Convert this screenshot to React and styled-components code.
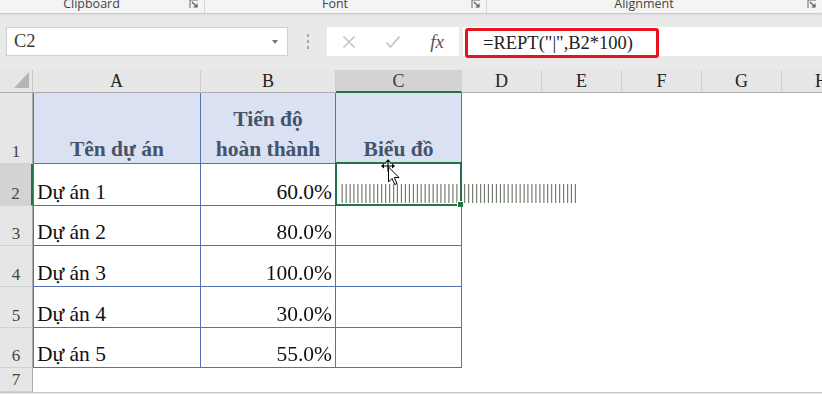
import React from "react";
import styled, { createGlobalStyle } from "styled-components";

const Global = createGlobalStyle`
  html, body { margin: 0; padding: 0; }
  body { width: 822px; height: 394px; overflow: hidden; background: #e9e9e9; }
  * { box-sizing: border-box; }
`;

const Page = styled.div`
  width: 822px;
  height: 394px;
  display: flex;
  flex-direction: column;
  background: #e9e9e9;
  overflow: hidden;
`;

/* ---------- ribbon group labels ---------- */
const Ribbon = styled.div`
  height: 13px;
  flex: none;
  display: flex;
  background: #f4f4f4;
  box-shadow: 0 1px 2px rgba(0, 0, 0, 0.18);
  position: relative;
  z-index: 1;
  overflow: hidden;
`;
const Group = styled.div`
  width: ${(p) => p.$w}px;
  flex: none;
  display: flex;
  align-items: flex-end;
  border-right: ${(p) => (p.$last ? "none" : "1px solid #d4d4d4")};
`;
const GroupLabel = styled.div`
  flex: 1;
  text-align: center;
  font-family: "Open Sans", "Noto Sans", sans-serif;
  font-size: 12.5px;
  line-height: 18px;
  color: #444;
  white-space: nowrap;
`;
const Launcher = styled.svg`
  width: 10px;
  height: 10px;
  flex: none;
  margin: 0 5px 4px 6px;
`;

const LauncherIcon = () => (
  <Launcher viewBox="0 0 10 10">
    <path d="M1 9 V1 H9" fill="none" stroke="#666" strokeWidth="1" />
    <path d="M3 3 L8 8 M8 4.5 V8 H4.5" fill="none" stroke="#555" strokeWidth="1.1" />
  </Launcher>
);

/* ---------- formula bar ---------- */
const FormulaRow = styled.div`
  height: 57px;
  flex: none;
  display: flex;
  align-items: flex-start;
  padding-top: 14px;
`;
const NameBox = styled.div`
  margin-left: 6px;
  width: 282px;
  height: 29px;
  background: #fff;
  border: 1px solid #d0d0d0;
  display: flex;
  align-items: center;
  padding: 0 7px;
  font-family: "Liberation Serif", serif;
  font-size: 18.5px;
  color: #3a3a3a;
`;
const NameText = styled.span`
  flex: 1;
`;
const Caret = styled.span`
  width: 0;
  height: 0;
  border-left: 3px solid transparent;
  border-right: 3px solid transparent;
  border-top: 4px solid #777;
  margin-right: 2px;
`;
const Grip = styled.div`
  width: 39px;
  height: 29px;
  display: flex;
  flex-direction: column;
  align-items: center;
  justify-content: center;
  gap: 3px;
`;
const Dot = styled.span`
  width: 2px;
  height: 3px;
  background: #a8a8a8;
`;
const FxButtons = styled.div`
  width: 132px;
  height: 29px;
  background: #fff;
  display: grid;
  grid-template-columns: repeat(3, 44px);
  align-items: center;
  justify-items: center;
`;
const FxText = styled.span`
  font-family: "Liberation Serif", serif;
  font-style: italic;
  font-size: 19px;
  color: #555;
`;
const FormulaInput = styled.div`
  flex: 1;
  margin-left: 4px;
  height: 29px;
  background: #fff;
  display: flex;
  align-items: flex-start;
  padding: 1px 0 0 2px;
  position: relative;
`;
const Highlight = styled.div`
  width: 194px;
  height: 30px;
  border: 3px solid #e5131c;
  border-radius: 3px;
  display: flex;
  align-items: center;
  padding-left: 15px;
  font-family: "Liberation Serif", serif;
  font-size: 18.5px;
  color: #222;
  white-space: nowrap;
`;

/* ---------- sheet ---------- */
const BLUE = "#4f73b3";
const GREEN = "#217346";

const Sheet = styled.div`
  flex: none;
  width: 862px;
  display: grid;
  grid-template-columns: 33px 168px 135px 126px repeat(5, 80px);
  grid-template-rows: 23px 71px 42px 40px 41px 41px 40px 24px;
  background: #fff;
  font-family: "Liberation Serif", serif;
`;
const Corner = styled.div`
  background: #e6e6e6;
  border-right: 1px solid #c8c8c8;
  border-bottom: 1px solid #ababab;
  display: flex;
  align-items: flex-end;
  justify-content: flex-end;
  padding: 0 3px 4px 0;
`;
const ColHead = styled.div`
  background: ${(p) => (p.$active ? "#d3d3d3" : "#e6e6e6")};
  border-right: 1px solid #cfcfcf;
  border-bottom: ${(p) => (p.$active ? `2px solid ${GREEN}` : "1px solid #ababab")};
  display: flex;
  align-items: center;
  justify-content: center;
  font-size: 18px;
  line-height: 22px;
  color: ${(p) => (p.$active ? "#3b3b3b" : "#222")};
  padding-top: ${(p) => (p.$active ? "1px" : "0")};
`;
const RowHead = styled.div`
  background: ${(p) => (p.$active ? "#d3d3d3" : "#e6e6e6")};
  border-right: ${(p) => (p.$active ? `2px solid ${GREEN}` : "1px solid #ababab")};
  border-bottom: 1px solid #d2d2d2;
  display: flex;
  align-items: flex-end;
  justify-content: center;
  font-size: 17px;
  line-height: 1;
  padding-bottom: 3px;
  color: #444;
`;
const Cell = styled.div`
  position: relative;
  display: flex;
  align-items: flex-end;
  justify-content: ${(p) => (p.$right ? "flex-end" : "flex-start")};
  padding: 0 3px 2px;
  font-size: 21.5px;
  line-height: 1;
  color: #111;
  white-space: nowrap;
  border-right: 1px solid ${BLUE};
  border-bottom: 1px solid ${BLUE};
  border-left: ${(p) => (p.$first ? `1px solid ${BLUE}` : "none")};
`;
const HeadCell = styled(Cell)`
  background: #d9e1f2;
  flex-direction: column;
  align-items: center;
  justify-content: flex-end;
  gap: 5px;
  font-weight: bold;
  color: #44546a;
  padding-bottom: 1px;
`;
const HeadLine = styled.span`
  line-height: 25px;
`;
const Blank = styled.div``;
const Bars = styled.span`
  display: inline-block;
  transform: translateZ(0);
  color: #6a7366;
  font-size: 21.5px;
  letter-spacing: -0.35px;
  margin-left: 1px;
  padding-bottom: 1px;
`;
const Selection = styled.div`
  position: absolute;
  top: -2px;
  left: -1px;
  right: -1px;
  bottom: -1px;
  border: 2px solid ${GREEN};
  pointer-events: none;
`;
const FillHandle = styled.div`
  position: absolute;
  right: -4px;
  bottom: -4px;
  width: 7px;
  height: 7px;
  background: ${GREEN};
  border: 1px solid #fff;
`;
const Cursor = styled.svg`
  position: absolute;
  left: 44px;
  top: -7px;
  width: 24px;
  height: 32px;
  z-index: 2;
`;
const Footer = styled.div`
  flex: 1;
  border-top: 1px solid #c4c4c4;
  background: #f0f0f0;
`;

const rows = [
  ["Dự án 1", "60.0%"],
  ["Dự án 2", "80.0%"],
  ["Dự án 3", "100.0%"],
  ["Dự án 4", "30.0%"],
  ["Dự án 5", "55.0%"],
];

const colLetters = ["A", "B", "C", "D", "E", "F", "G", "H"];

const MoveCursor = () => (
  <Cursor viewBox="0 0 24 32">
    <g fill="none" stroke="#fff" strokeWidth="3" strokeLinecap="round">
      <path d="M2 9 H14 M8 3 V15" />
    </g>
    <g fill="none" stroke="#000" strokeWidth="1.2">
      <path d="M2.5 9 H13.5 M8 3.5 V14.5" />
    </g>
    <g fill="#000">
      <path d="M1 9 L4 6.5 V11.5 Z" />
      <path d="M15 9 L12 6.5 V11.5 Z" />
      <path d="M8 2 L5.5 5 H10.5 Z" />
    </g>
    <path
      d="M8.5 10 L8.5 25 L12 21.5 L14.8 27.5 L17 26.5 L14.3 20.5 L19 20.5 Z"
      fill="#fff"
      stroke="#000"
      strokeWidth="1"
      strokeLinejoin="round"
    />
  </Cursor>
);

export default function App() {
  return (
    <Page>
      <Global />
      <Ribbon>
        <Group $w={205}>
          <GroupLabel>Clipboard</GroupLabel>
          <LauncherIcon />
        </Group>
        <Group $w={282}>
          <GroupLabel>Font</GroupLabel>
          <LauncherIcon />
        </Group>
        <Group $w={335} $last>
          <GroupLabel>Alignment</GroupLabel>
          <LauncherIcon />
        </Group>
      </Ribbon>

      <FormulaRow>
        <NameBox>
          <NameText>C2</NameText>
          <Caret />
        </NameBox>
        <Grip>
          <Dot />
          <Dot />
          <Dot />
        </Grip>
        <FxButtons>
          <svg width="14" height="14" viewBox="0 0 14 14">
            <path d="M1.5 1.5 L12.5 12.5 M12.5 1.5 L1.5 12.5" stroke="#c4c4c4" strokeWidth="1.6" />
          </svg>
          <svg width="16" height="14" viewBox="0 0 16 14">
            <path d="M1.5 7.5 L5.5 12 L14.5 1.5" fill="none" stroke="#c4c4c4" strokeWidth="1.8" />
          </svg>
          <FxText>fx</FxText>
        </FxButtons>
        <FormulaInput>
          <Highlight>=REPT("|",B2*100)</Highlight>
        </FormulaInput>
      </FormulaRow>

      <Sheet>
        <Corner>
          <svg width="15" height="16" viewBox="0 0 15 16">
            <path d="M15 0 V16 H0 Z" fill="#b5b5b5" />
          </svg>
        </Corner>
        {colLetters.map((c) => (
          <ColHead key={c} $active={c === "C"}>
            {c}
          </ColHead>
        ))}

        <RowHead>1</RowHead>
        <HeadCell $first>
          <HeadLine>Tên dự án</HeadLine>
        </HeadCell>
        <HeadCell>
          <HeadLine>Tiến độ</HeadLine>
          <HeadLine>hoàn thành</HeadLine>
        </HeadCell>
        <HeadCell>
          <HeadLine>Biểu đồ</HeadLine>
        </HeadCell>
        {[0, 1, 2, 3, 4].map((i) => (
          <Blank key={"b1" + i} />
        ))}

        {rows.map(([name, pct], i) => (
          <React.Fragment key={name}>
            <RowHead $active={i === 0}>{i + 2}</RowHead>
            <Cell $first>{name}</Cell>
            <Cell $right>{pct}</Cell>
            <Cell>
              {i === 0 && (
                <>
                  <Bars>{"|".repeat(60)}</Bars>
                  <Selection>
                    <FillHandle />
                  </Selection>
                  <MoveCursor />
                </>
              )}
            </Cell>
            {[0, 1, 2, 3, 4].map((j) => (
              <Blank key={j} />
            ))}
          </React.Fragment>
        ))}

        <RowHead>7</RowHead>
        {[0, 1, 2, 3, 4, 5, 6, 7].map((j) => (
          <Blank key={"r7" + j} />
        ))}
      </Sheet>
      <Footer />
    </Page>
  );
}
